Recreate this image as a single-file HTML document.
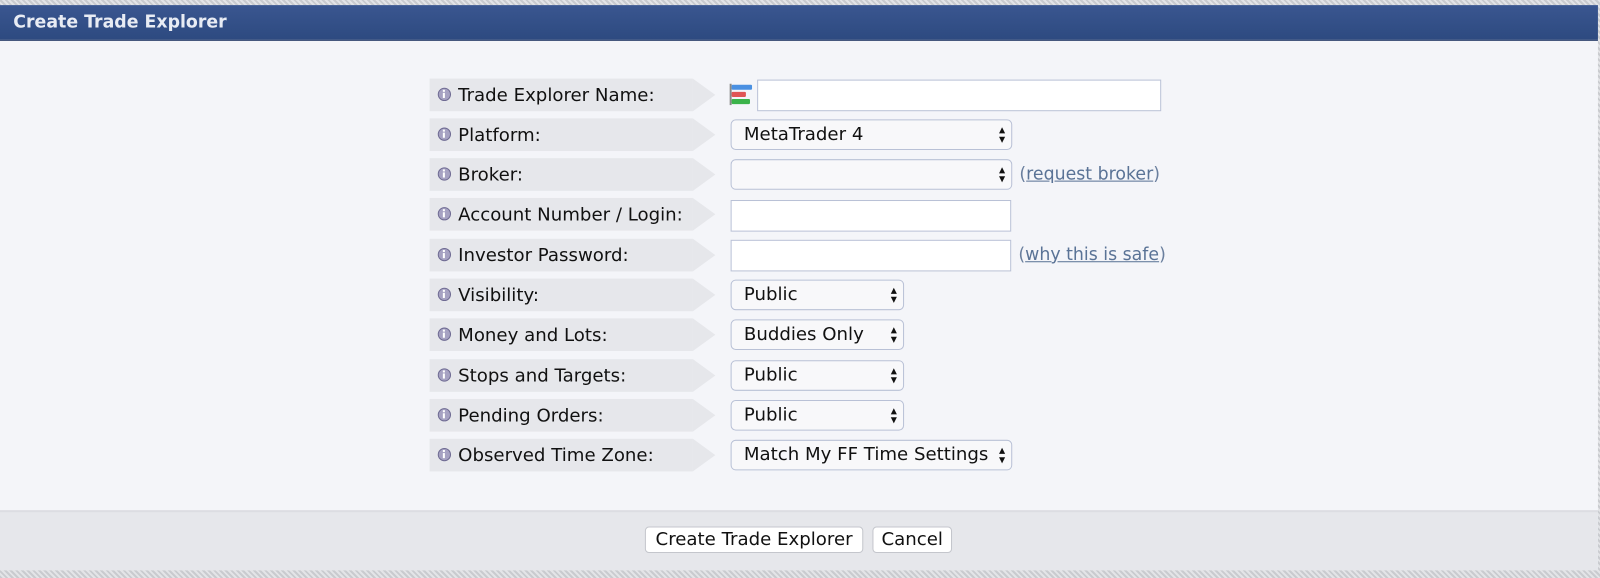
<!DOCTYPE html>
<html><head><style>
body{margin:0;width:1600px;height:578px;overflow:hidden;background:repeating-linear-gradient(45deg,#c9cbcf 0 2px,#e3e4e7 2px 4px);font-family:"DejaVu Sans","Liberation Sans",sans-serif;}
#w{position:absolute;left:0;top:0;width:1568px;height:566px;transform:scale(1.0204);transform-origin:0 0}
.panel{position:absolute;left:0;top:5px;width:1566px;height:552px;background:#f4f5f9;}
.hdr{position:absolute;left:0;top:0;width:100%;height:35px;background:linear-gradient(#3a5690,#2d4a80);color:#e8ecf4;font-weight:bold;font-size:17px;line-height:35px;box-sizing:border-box;padding-left:13px;border-bottom:1px solid #1f3563}
.ftr{position:absolute;left:0;top:495px;width:100%;height:57px;background:#e6e7eb;border-top:2px solid #dcdde2}
.lbl{position:absolute;left:421px;height:32px;background:#e6e7eb;font-size:17.8px;line-height:33px;color:#111;padding-left:28px;box-sizing:border-box;width:258px}
.lbl:after{content:"";position:absolute;right:-22px;top:0;border-left:22px solid #e6e7eb;border-top:16px solid transparent;border-bottom:16px solid transparent}
.lbl i{position:absolute;left:8px;top:9px;width:13px;height:13px;border-radius:50%;background:#a6a2c2;border:1.5px solid #6e6a92;box-sizing:border-box}
.lbl i:before{content:"";position:absolute;left:4px;top:4px;width:2px;height:5px;background:#fff}
.lbl i:after{content:"";position:absolute;left:4px;top:1px;width:2px;height:2px;background:#fff}
.sel{position:absolute;left:716px;height:30px;box-sizing:border-box;border:1px solid #b9c1d6;border-radius:5px;background:#f8f8fa;font-size:17.8px;line-height:28px;padding-left:12px;color:#111}
.sel:after{content:"▴\A▾";white-space:pre;position:absolute;right:6px;top:5px;font-size:12px;line-height:9px;color:#111}
.inp{position:absolute;height:31px;box-sizing:border-box;border:1px solid #b9c1d6;background:#fff}
.lnk{position:absolute;font-size:17px;color:#6a7f9e}
.lnk u{color:#5a7396}
.btn{position:absolute;top:516px;height:26px;box-sizing:border-box;border:1px solid #c4c6cc;border-radius:4px;background:#fff;font-size:17.8px;line-height:24px;text-align:center;color:#111;white-space:nowrap}
</style></head><body><div id="w">
<div class="panel">
<div class="hdr">Create Trade Explorer</div>
<div class="ftr"></div>
</div>
<div class="lbl" style="top:77px"><i></i>Trade Explorer Name:</div>
<div class="lbl" style="top:116px"><i></i>Platform:</div>
<div class="lbl" style="top:155px"><i></i>Broker:</div>
<div class="lbl" style="top:194px"><i></i>Account Number / Login:</div>
<div class="lbl" style="top:234px"><i></i>Investor Password:</div>
<div class="lbl" style="top:273px"><i></i>Visibility:</div>
<div class="lbl" style="top:312px"><i></i>Money and Lots:</div>
<div class="lbl" style="top:352px"><i></i>Stops and Targets:</div>
<div class="lbl" style="top:391px"><i></i>Pending Orders:</div>
<div class="lbl" style="top:430px"><i></i>Observed Time Zone:</div>
<svg style="position:absolute;left:715px;top:82px" width="24" height="22"><rect x="0" y="0" width="2" height="21" fill="#888"/><rect x="2" y="1" width="20" height="5" rx="1" fill="#4a90e2"/><rect x="2" y="8" width="14" height="5" rx="1" fill="#e05555"/><rect x="2" y="15" width="18" height="5" rx="1" fill="#3bb34a"/></svg>
<div class="inp" style="left:742px;top:78px;width:396px"></div>
<div class="sel" style="top:117px;width:276px">MetaTrader 4</div>
<div class="sel" style="top:156px;width:276px"></div>
<div class="lnk" style="left:999px;top:161px">(<u>request broker</u>)</div>
<div class="inp" style="left:716px;top:196px;width:275px"></div>
<div class="inp" style="left:716px;top:235px;width:275px"></div>
<div class="lnk" style="left:998px;top:240px">(<u>why this is safe</u>)</div>
<div class="sel" style="top:274px;width:170px">Public</div>
<div class="sel" style="top:313px;width:170px">Buddies Only</div>
<div class="sel" style="top:353px;width:170px">Public</div>
<div class="sel" style="top:392px;width:170px">Public</div>
<div class="sel" style="top:431px;width:276px">Match My FF Time Settings</div>
<div class="btn" style="left:632px;width:214px">Create Trade Explorer</div>
<div class="btn" style="left:855px;width:78px">Cancel</div>
</div></body></html>
